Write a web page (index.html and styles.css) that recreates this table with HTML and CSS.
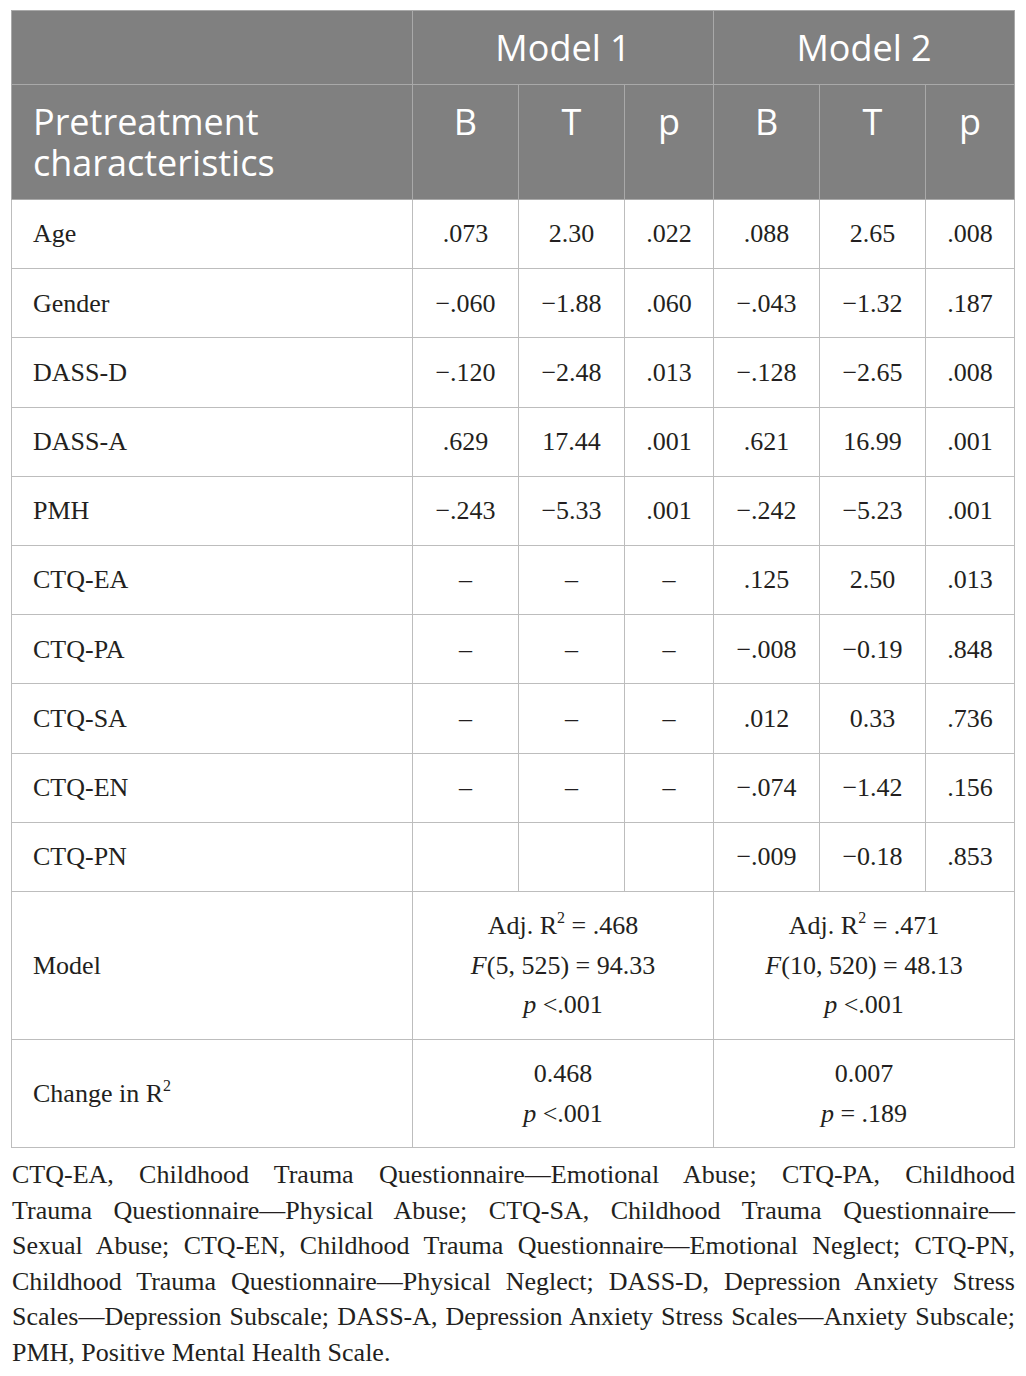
FILE: index.html
```html
<!DOCTYPE html>
<html lang="en">
<head>
    <meta charset="UTF-8">
    <title>Regression Table</title>
    <link rel="stylesheet" href="styles.css">
</head>
<body>
    <table class="results">
        <colgroup>
            <col class="col-label">
            <col class="col-b"><col class="col-t"><col class="col-p">
            <col class="col-b"><col class="col-t"><col class="col-p">
        </colgroup>
        <thead>
            <tr class="head-top">
                <th></th>
                <th colspan="3">Model 1</th>
                <th colspan="3">Model 2</th>
            </tr>
            <tr class="head-sub">
                <th class="label">Pretreatment<br>characteristics</th>
                <th>B</th><th>T</th><th>p</th>
                <th>B</th><th>T</th><th>p</th>
            </tr>
        </thead>
        <tbody>
            <tr><td class="label">Age</td><td>.073</td><td>2.30</td><td>.022</td><td>.088</td><td>2.65</td><td>.008</td></tr>
            <tr><td class="label">Gender</td><td>&minus;.060</td><td>&minus;1.88</td><td>.060</td><td>&minus;.043</td><td>&minus;1.32</td><td>.187</td></tr>
            <tr><td class="label">DASS-D</td><td>&minus;.120</td><td>&minus;2.48</td><td>.013</td><td>&minus;.128</td><td>&minus;2.65</td><td>.008</td></tr>
            <tr><td class="label">DASS-A</td><td>.629</td><td>17.44</td><td>.001</td><td>.621</td><td>16.99</td><td>.001</td></tr>
            <tr><td class="label">PMH</td><td>&minus;.243</td><td>&minus;5.33</td><td>.001</td><td>&minus;.242</td><td>&minus;5.23</td><td>.001</td></tr>
            <tr><td class="label">CTQ-EA</td><td>&ndash;</td><td>&ndash;</td><td>&ndash;</td><td>.125</td><td>2.50</td><td>.013</td></tr>
            <tr><td class="label">CTQ-PA</td><td>&ndash;</td><td>&ndash;</td><td>&ndash;</td><td>&minus;.008</td><td>&minus;0.19</td><td>.848</td></tr>
            <tr><td class="label">CTQ-SA</td><td>&ndash;</td><td>&ndash;</td><td>&ndash;</td><td>.012</td><td>0.33</td><td>.736</td></tr>
            <tr><td class="label">CTQ-EN</td><td>&ndash;</td><td>&ndash;</td><td>&ndash;</td><td>&minus;.074</td><td>&minus;1.42</td><td>.156</td></tr>
            <tr><td class="label">CTQ-PN</td><td></td><td></td><td></td><td>&minus;.009</td><td>&minus;0.18</td><td>.853</td></tr>
            <tr>
                <td class="label">Model</td>
                <td colspan="3">Adj. R<sup>2</sup> = .468<br><i>F</i>(5, 525) = 94.33<br><i>p</i> &lt;.001</td>
                <td colspan="3">Adj. R<sup>2</sup> = .471<br><i>F</i>(10, 520) = 48.13<br><i>p</i> &lt;.001</td>
            </tr>
            <tr>
                <td class="label">Change in R<sup>2</sup></td>
                <td colspan="3">0.468<br><i>p</i> &lt;.001</td>
                <td colspan="3">0.007<br><i>p</i> = .189</td>
            </tr>
        </tbody>
    </table>

    <p class="footnote">
        <span class="line">CTQ-EA, Childhood Trauma Questionnaire&mdash;Emotional Abuse; CTQ-PA, Childhood</span>
        <span class="line">Trauma Questionnaire&mdash;Physical Abuse; CTQ-SA, Childhood Trauma Questionnaire&mdash;</span>
        <span class="line">Sexual Abuse; CTQ-EN, Childhood Trauma Questionnaire&mdash;Emotional Neglect; CTQ-PN,</span>
        <span class="line">Childhood Trauma Questionnaire&mdash;Physical Neglect; DASS-D, Depression Anxiety Stress</span>
        <span class="line">Scales&mdash;Depression Subscale; DASS-A, Depression Anxiety Stress Scales&mdash;Anxiety Subscale;</span>
        <span class="line last">PMH, Positive Mental Health Scale.</span>
    </p>
</body>
</html>
```

FILE: styles.css
```css
body {
    margin: 0;
    padding: 10px 11px;
    background-color: #fff;
    color: #231f20;
    font-family: "Liberation Serif", "Times New Roman", serif;
}

.results {
    width: 1004px;
    border-collapse: collapse;
    table-layout: fixed;
    border: 1px solid #b4b4b4;
}

.col-label { width: 401px; }
.col-b { width: 106px; }
.col-t { width: 106px; }
.col-p { width: 89px; }

.results th {
    background-color: #808080;
    color: #fff;
    font-family: "Open Sans", "DejaVu Sans", sans-serif;
    font-weight: 400;
    font-size: 36px;
    line-height: 41px;
    padding: 16px 10px;
    text-align: center;
    vertical-align: top;
    border: 1px solid #a9a9a9;
}

.results th.label {
    text-align: left;
    padding-left: 21px;
}

.results td {
    font-size: 26px;
    line-height: 39.4px;
    padding: 14.4px 8px;
    text-align: center;
    vertical-align: middle;
    border: 1px solid #bdbdbd;
}

.results td.label {
    text-align: left;
    padding-left: 21px;
}

.results sup {
    font-size: 16px;
    line-height: 0;
    vertical-align: 11px;
}

.footnote {
    margin: 9px 0 0 1px;
    font-size: 26px;
    line-height: 35.4px;
}

.footnote .line {
    display: block;
    text-align: justify;
    text-align-last: justify;
}

.footnote .line.last {
    text-align-last: left;
}
```
